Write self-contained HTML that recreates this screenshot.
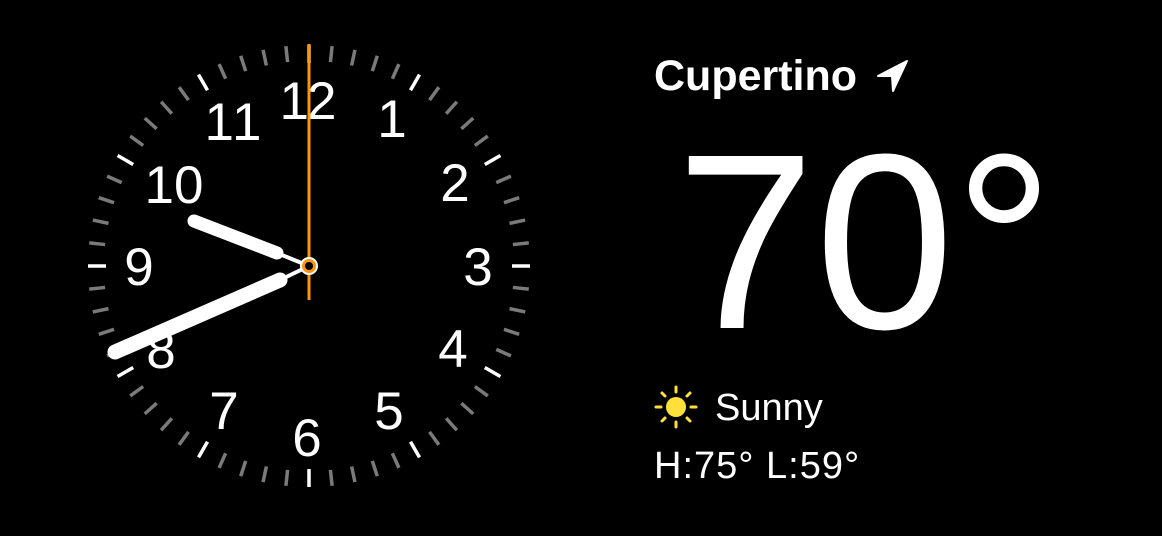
<!DOCTYPE html>
<html><head><meta charset="utf-8"><style>
html,body{margin:0;padding:0;background:#000;width:1162px;height:536px;overflow:hidden}
</style></head><body>
<svg width="1162" height="536" viewBox="0 0 1162 536" xmlns="http://www.w3.org/2000/svg">
<rect width="1162" height="536" fill="#000"/>
<g id="t"></g>
<g font-family="Liberation Sans, sans-serif" font-size="53" fill="#fff" text-anchor="middle">
<text x="307" y="119" letter-spacing="-2">12</text>
<text x="392" y="137">1</text>
<text x="455" y="201">2</text>
<text x="478" y="285">3</text>
<text x="453" y="367">4</text>
<text x="389" y="429">5</text>
<text x="307" y="456">6</text>
<text x="224" y="429">7</text>
<text x="161" y="368">8</text>
<text x="139" y="285">9</text>
<text x="174" y="203">10</text>
<text x="234" y="140" letter-spacing="2">11</text>
</g>
<line x1="309" y1="266" x2="277" y2="253" stroke="#fff" stroke-width="4"/>
<line x1="277" y1="253" x2="194" y2="221" stroke="#fff" stroke-width="13" stroke-linecap="round"/>
<line x1="309" y1="266" x2="280" y2="280" stroke="#fff" stroke-width="4"/>
<line x1="280" y1="280" x2="115" y2="352" stroke="#fff" stroke-width="15" stroke-linecap="round"/>
<line x1="309" y1="44" x2="309" y2="300" stroke="#ff9500" stroke-width="3"/>
<circle cx="309" cy="266" r="9" fill="#fff"/>
<circle cx="309" cy="266" r="7" fill="#ff9500"/>
<circle cx="309" cy="266" r="4" fill="#000"/>
<g font-family="Liberation Sans, sans-serif" fill="#fff">
<text x="654" y="90" font-size="43" font-weight="bold">Cupertino</text>
<text x="676" y="328" font-size="250" letter-spacing="0">70°</text>
<text x="715" y="420" font-size="38">Sunny</text>
<text x="654" y="478" font-size="38" letter-spacing="1">H:75° L:59°</text>
</g>
<path d="M878 76 L907 61 L893 91 L892 76 Z" fill="#fff" stroke="#fff" stroke-width="2" stroke-linejoin="round"/>
<g transform="translate(676,407)" stroke="#ffe03a" stroke-width="3" stroke-linecap="round">
<circle r="10" fill="#ffe03a" stroke="none"/>
<line x1="0" y1="-15" x2="0" y2="-20"/><line x1="0" y1="15" x2="0" y2="20"/>
<line x1="-15" y1="0" x2="-20" y2="0"/><line x1="15" y1="0" x2="20" y2="0"/>
<line x1="11" y1="11" x2="14" y2="14"/><line x1="-11" y1="11" x2="-14" y2="14"/>
<line x1="11" y1="-11" x2="14" y2="-14"/><line x1="-11" y1="-11" x2="-14" y2="-14"/>
</g>
</svg>
<script>
var g=document.getElementById('t');var s='';
for(var i=0;i<60;i++){var a=i*Math.PI/30;var c=Math.sin(a),d=-Math.cos(a);var h=i%5==0;
var r1=h?203:205,r2=221;
s+='<line x1="'+(309+c*r1)+'" y1="'+(266+d*r1)+'" x2="'+(309+c*r2)+'" y2="'+(266+d*r2)+'" stroke="'+(h?'#fff':'#7a7a7a')+'" stroke-width="3.5"/>';}
g.innerHTML=s;
</script>
</body></html>
